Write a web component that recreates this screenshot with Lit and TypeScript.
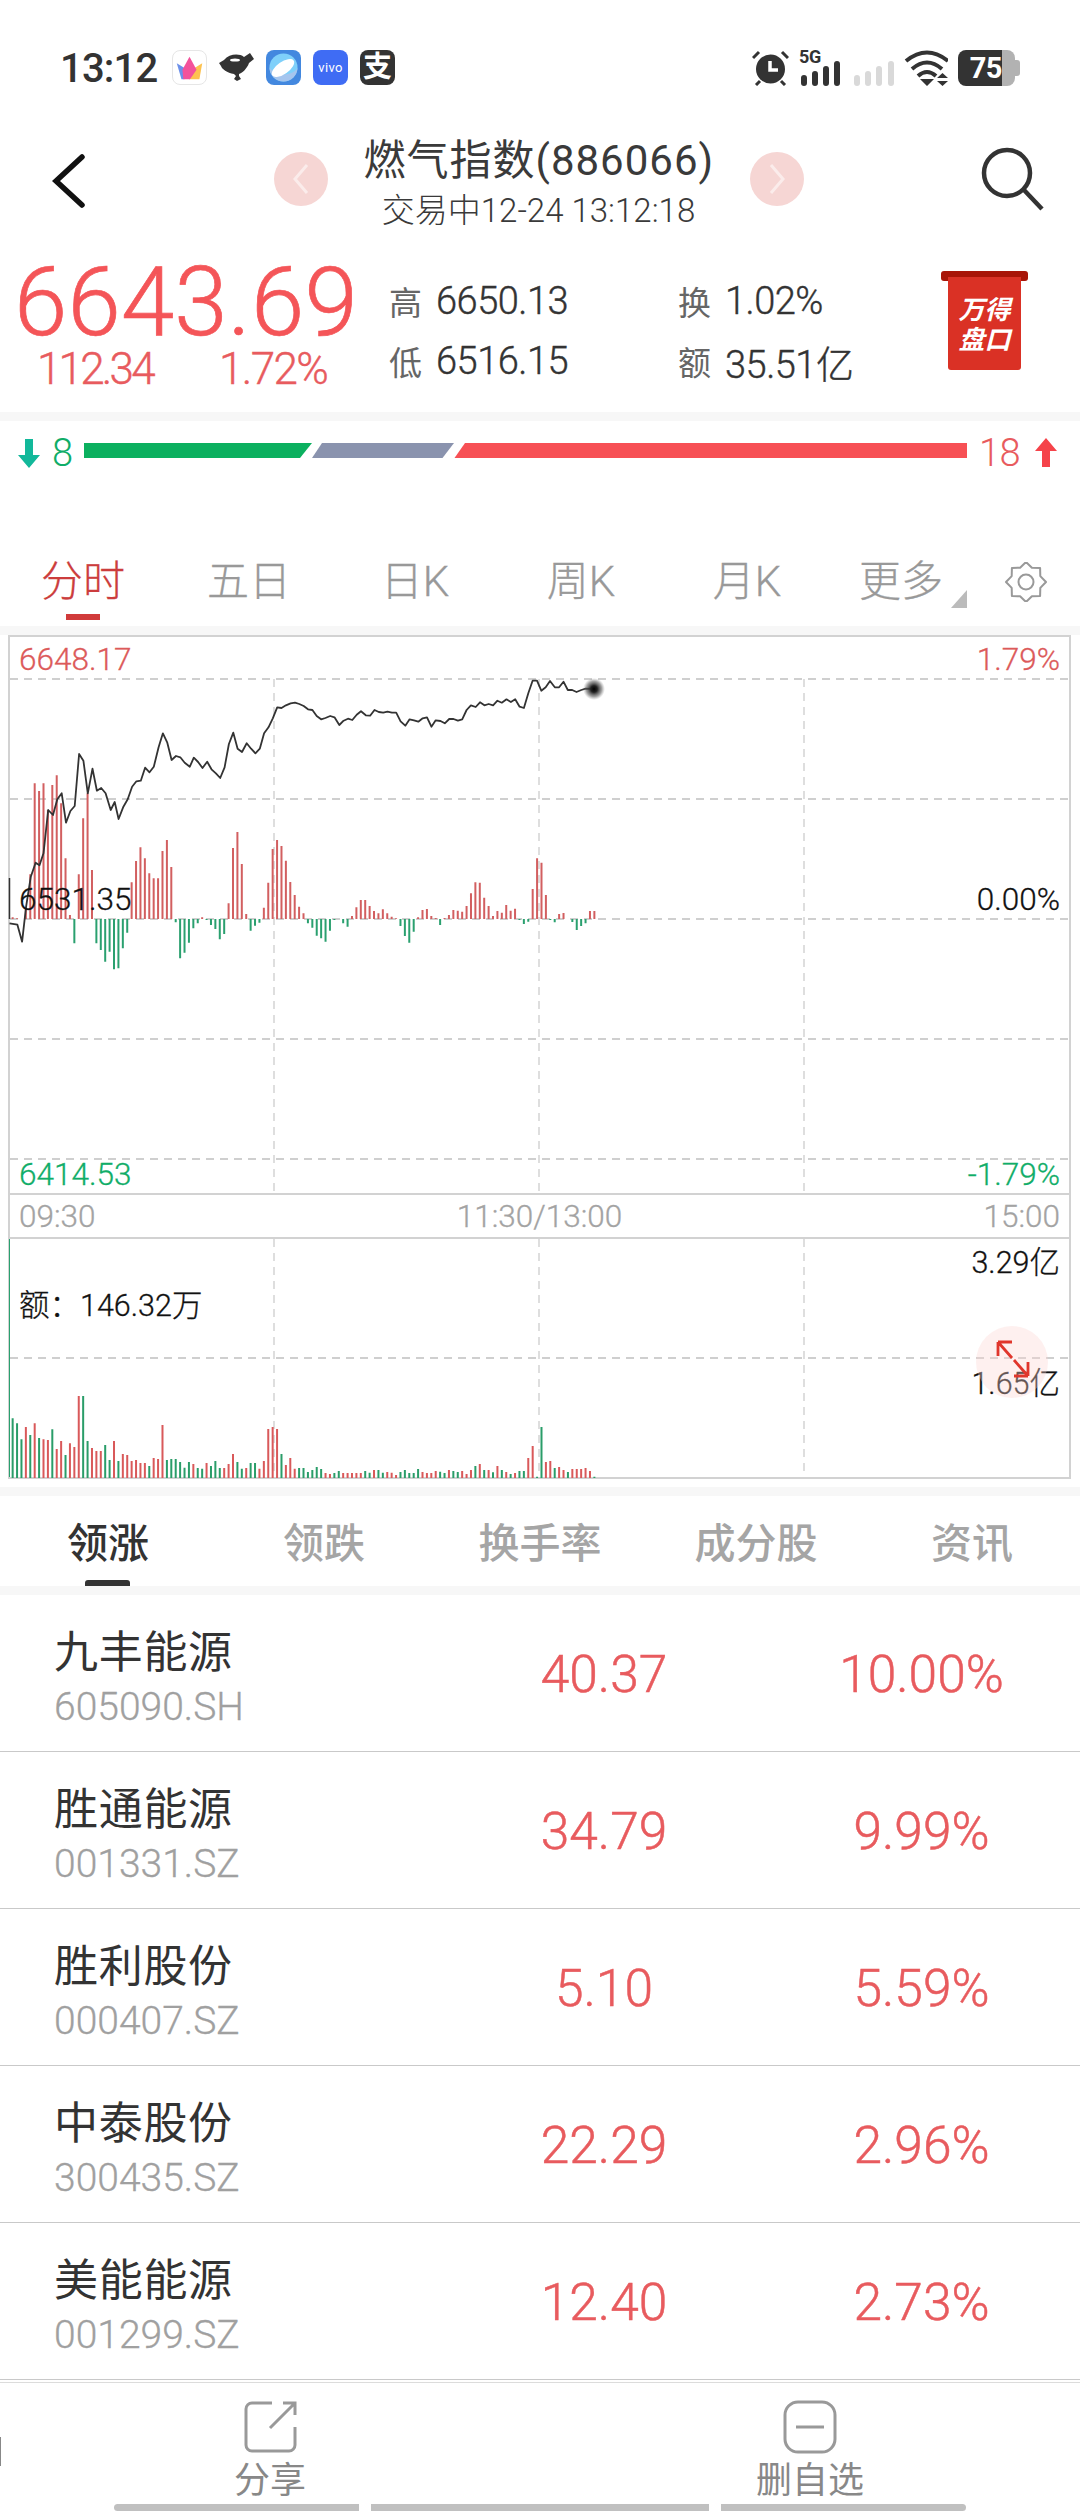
import { LitElement, html, css, svg } from "lit";
import { customElement } from "lit/decorators.js";

const PRICE: number[] = [24,880,44,884,56,935,66,830,78,740,90,698,100,706,110,670,122,540,134,555,145,508,156,490,167,578,178,543,189,528,200,372,211,392,222,490,234,416,245,482,256,474,267,490,280,540,290,516,300,567,312,530,323,508,334,470,345,454,356,452,367,413,378,427,389,410,401,352,412,310,423,338,434,390,445,378,456,382,467,398,480,410,490,383,501,396,512,414,524,395,535,418,546,430,557,444,568,412,579,342,590,308,601,356,612,366,624,340,635,356,646,370,657,356,668,310,679,292,690,265,701,232,712,234,723,226,735,220,746,218,757,222,768,228,779,238,790,240,801,258,812,268,823,264,835,258,846,262,858,285,869,272,880,266,891,270,902,254,913,244,925,256,936,257,947,240,958,246,969,248,980,245,991,248,1002,248,1013,274,1025,287,1036,268,1047,271,1058,275,1069,265,1080,262,1091,290,1102,271,1114,273,1125,280,1136,267,1147,267,1158,272,1169,268,1180,240,1191,226,1203,231,1214,217,1225,226,1236,222,1247,226,1258,212,1269,218,1281,208,1292,216,1303,208,1314,230,1325,234,1336,190,1347,152,1358,152,1369,182,1380,172,1391,153,1403,172,1414,172,1425,155,1436,180,1447,180,1458,186,1470,180,1481,176,1503,177];

// Top of each flow bar in the 3x reference crop; negative = green bar below the zero line.
const FLOW: number[] = [862,865,0,840,733,460,483,460,540,465,436,520,685,855,-940,733,565,490,720,-940,-960,-995,-965,-1018,-1015,-955,-908,757,693,652,685,730,745,745,663,630,711,-877,-985,-968,-938,-895,-880,862,-870,-885,-897,-928,-912,820,654,606,702,852,-902,-887,-878,833,758,657,630,648,692,756,795,830,850,-880,-893,-917,-925,-935,-902,-870,867,-880,-890,858,832,810,810,828,843,850,838,850,860,865,-888,-918,-938,-905,862,840,837,858,864,-885,864,855,840,842,845,828,790,757,758,803,828,858,843,848,825,842,836,-870,-882,-875,777,685,698,795,-870,-877,852,849,867,-876,-900,-888,-880,843,843];

// Top of each volume bar in the crop; negative = green.
const VOL: number[] = [-745,-760,-808,771,-795,760,-804,808,810,-778,837,813,-855,820,831,678,-678,-813,834,843,843,-825,-870,813,-873,852,855,873,870,879,879,-888,864,867,765,-870,-867,-867,-876,-893,-876,882,-894,-896,879,-888,-873,-894,894,882,852,-876,-896,894,-879,-879,896,873,777,771,777,-852,885,864,896,-894,-894,-906,-900,-891,-897,909,912,-909,-903,909,909,909,909,909,-903,-908,900,-900,-908,906,908,915,-906,-900,-909,-909,-897,906,909,909,903,-905,-909,900,-903,-906,903,912,900,-888,882,-900,900,-907,888,-900,906,-912,909,-903,-903,864,828,-920,-771,876,873,-894,891,900,-906,897,897,897,894,903,-920];

const barX = (i: number) => (12.65 + 4.407 * i).toFixed(2);

function flowPath(positive: boolean): string {
  let d = "";
  FLOW.forEach((v, i) => {
    if (v === 0 || v > 0 !== positive) return;
    d += `M${barX(i)} 919V${(630 + Math.abs(v) / 3).toFixed(1)}`;
  });
  return d;
}

function volPath(positive: boolean): string {
  let d = "";
  VOL.forEach((v, i) => {
    if (v > 0 !== positive) return;
    d += `M${barX(i)} 1478V${(1170 + Math.abs(v) / 3).toFixed(1)}`;
  });
  return d;
}

function pricePath(): string {
  let d = "";
  for (let i = 0; i < PRICE.length; i += 2) {
    d += `${i === 0 ? "M" : "L"}${(PRICE[i] / 2.529).toFixed(1)} ${(630 + PRICE[i + 1] / 3).toFixed(1)}`;
  }
  return d;
}

function gearPath(): string {
  const n = 8;
  const pts: string[] = [];
  for (let i = 0; i < n * 2; i++) {
    const a = (i * Math.PI) / n - Math.PI / 2;
    const r = i % 2 === 0 ? 20 : 15.5;
    const x = (21 + r * Math.cos(a)).toFixed(1);
    const y = (20 + r * Math.sin(a)).toFixed(1);
    pts.push(`${x} ${y}`);
  }
  return `M${pts[0]}` + pts.slice(1).concat(pts[0]).map((p) => `L${p}`).join("") + "Z";
}

interface Row { name: string; code: string; price: string; pct: string; }
const ROWS: Row[] = [
  { name: "九丰能源", code: "605090.SH", price: "40.37", pct: "10.00%" },
  { name: "胜通能源", code: "001331.SZ", price: "34.79", pct: "9.99%" },
  { name: "胜利股份", code: "000407.SZ", price: "5.10", pct: "5.59%" },
  { name: "中泰股份", code: "300435.SZ", price: "22.29", pct: "2.96%" },
  { name: "美能能源", code: "001299.SZ", price: "12.40", pct: "2.73%" },
];

@customElement("app-root")
export class AppRoot extends LitElement {
  static styles = css`
    :host {
      display: block;
      width: 1080px;
      height: 2520px;
      overflow: hidden;
      background: #fff;
      color: #333;
      font-family: Roboto, "Noto Sans CJK SC", sans-serif;
    }
    svg { display: block; }

    .status { height: 120px; padding: 50px 60px 0; box-sizing: border-box; display: flex; justify-content: space-between; align-items: flex-start; }
    .status-left, .status-right { display: flex; align-items: flex-start; }
    .time { width: 112px; font-size: 40px; line-height: 38px; font-weight: 500; color: #333; letter-spacing: -0.8px; }
    .apps { display: flex; gap: 12px; }
    .app { width: 35px; height: 35px; border-radius: 8px; box-sizing: border-box; overflow: hidden; display: flex; align-items: center; justify-content: center; }
    .app.crown { border: 1px solid #e6e6e6; background: #fff; }
    .app.planet { background: #4388df; }
    .app.vivo { background: #3f6cf4; color: #fff; font-size: 13px; letter-spacing: 0.3px; }
    .app.ali { background: #333; color: #fff; font-size: 29px; font-weight: 700; line-height: 35px; }
    .alarm { margin-right: 10px; }
    .net { width: 42px; height: 36px; position: relative; margin-right: 13px; }
    .g5 { position: absolute; left: 0; top: -3px; font-size: 18px; line-height: 20px; font-weight: 700; color: #333; letter-spacing: -0.3px; }
    .sig2 { margin-right: 10px; }
    .wifi { margin-right: 10px; }
    .batt { display: flex; align-items: center; height: 36px; }
    .batt-dark { width: 44px; height: 36px; background: #333; border-radius: 8px 0 0 8px; color: #fff; font-size: 29px; font-weight: 700; line-height: 36px; text-align: right; letter-spacing: -0.5px; }
    .batt-rest { width: 13px; height: 36px; background: #b2b2b2; border-radius: 0 8px 8px 0; }
    .batt-nub { width: 5px; height: 16px; background: #b2b2b2; border-radius: 0 3px 3px 0; }

    .head { height: 120px; display: grid; grid-template-columns: 1fr auto 1fr; padding-right: 3px; box-sizing: border-box; }
    .back { padding: 33px 0 0 52px; }
    .head-mid { display: flex; align-items: flex-start; gap: 36px; padding-top: 32px; }
    .round { width: 54px; height: 54px; border-radius: 50%; background: #f6d6d4; display: flex; align-items: center; justify-content: center; }
    .title-box { width: 350px; text-align: center; margin-top: -16px; }
    .title { font-size: 42px; line-height: 50px; color: #3a3a3a; white-space: nowrap; letter-spacing: 1px; }
    .sub { font-size: 33px; line-height: 44px; margin-top: 3px; font-weight: 300; color: #3a3a3a; white-space: nowrap; }
    .search { justify-self: end; padding: 27px 32px 0 0; }

    .quote { height: 172px; display: flex; box-sizing: border-box; }
    .q-left { width: 389px; flex: none; }
    .price { font-size: 96px; line-height: 80px; margin: 22px 0 0 14px; font-weight: 300; color: #f45558; letter-spacing: 0.2px; white-space: nowrap; -webkit-text-stroke: 0.7px #f45558; }
    .chg { display: grid; grid-template-columns: 182px auto; margin: 10px 0 0 37px; font-size: 44px; line-height: 34px; font-weight: 300; color: #e85b5e; -webkit-text-stroke: 0.4px #e85b5e; }
    .chg .a { letter-spacing: -2.8px; }
    .chg .b { letter-spacing: -1.6px; }
    .stats { width: 552px; flex: none; display: grid; grid-template-columns: 289px 263px; grid-auto-rows: 60px; padding-top: 31px; }
    .stat { display: flex; align-items: center; white-space: nowrap; }
    .stat b { font-weight: 400; font-size: 33px; color: #666; width: 47px; flex: none; }
    .stat span { font-size: 38px; color: #333; font-weight: 300; letter-spacing: -0.5px; -webkit-text-stroke: 0.4px #333; }
    .badge { width: 87px; margin-top: 31px; position: relative; }
    .badge-top { height: 10px; background: #a81508; border-radius: 3px; }
    .badge-body { width: 73px; height: 93px; margin: -4px 0 0 7px; background: #da3125; border-radius: 0 0 3px 3px; color: #fff; font-weight: 700; font-style: italic; font-size: 26px; line-height: 30px; text-align: center; padding-top: 18px; box-sizing: border-box; }

    .strip { height: 9px; background: #f7f7f7; }

    .breadth { height: 119px; box-sizing: border-box; padding: 17px 0 0 18px; display: flex; align-items: flex-start; }
    .breadth .n { font-size: 38px; line-height: 30px; font-weight: 300; }
    .n.down { color: #10ad68; width: 32px; margin-left: 12px; }
    .n.up { color: #e85b5e; width: 56px; margin-left: 12px; letter-spacing: -0.6px; }
    .bars { margin-top: 5px; }

    .tabs { height: 86px; display: grid; grid-template-columns: repeat(6, 166px) 1fr; }
    .tab { font-size: 42px; line-height: 40px; color: #999; text-align: center; padding-top: 22px; font-weight: 300; position: relative; white-space: nowrap; -webkit-text-stroke: 0.3px #999; }
    .tab.on { color: #cc3d3d; -webkit-text-stroke: 0.3px #cc3d3d; }
    .tab.on::after { content: ""; position: absolute; left: 66px; top: 74px; width: 34px; height: 6px; background: #d13b3b; }
    .tab.more { display: flex; justify-content: center; }
    .more-tri { margin: 28px 0 0 8px; }
    .gear { padding: 22px 0 0 9px; }

    .frame { box-sizing: border-box; width: 1063px; height: 844px; margin: 0 0 8px 8px; border: 2px solid #d2d2d2; }
    .main { position: relative; height: 556px; }
    .axis { height: 42px; border-top: 2px solid #d2d2d2; border-bottom: 2px solid #d2d2d2; display: flex; align-items: center; justify-content: space-between; padding: 0 9px; font-size: 31.5px; color: #a3a3a3; font-weight: 300; -webkit-text-stroke: 0.3px #a3a3a3; }
    .vol { position: relative; height: 238px; }
    .chart { overflow: visible; }
    .lbl { position: absolute; font-size: 31.5px; line-height: 30px; font-weight: 300; white-space: nowrap; -webkit-text-stroke: 0.3px currentColor; }
    .lbl.l { left: 9px; }
    .lbl.r { right: 9px; }
    .red { color: #dc5a5a; }
    .grn { color: #10ad68; }
    .blk { color: #111; }
    .vol .lbl { font-size: 30.5px; }
    .expand { position: absolute; left: 966px; top: 87px; }

    .tabs2 { height: 90px; display: grid; grid-template-columns: repeat(5, 216px); }
    .t2 { font-size: 41px; line-height: 40px; padding-top: 28px; text-align: center; color: #a5a5a5; font-weight: 500; position: relative; }
    .t2.on { color: #333; }
    .t2.on::after { content: ""; position: absolute; left: 85px; top: 84px; width: 45px; height: 6px; background: #333; border-radius: 3px 3px 0 0; }

    .row { height: 157px; box-sizing: border-box; border-bottom: 1px solid #c9c9c9; display: grid; grid-template-columns: 445px 318px 317px; }
    .row-name { padding: 33px 0 0 54px; }
    .nm { font-size: 44px; line-height: 50px; color: #333; letter-spacing: 0.7px; }
    .cd { font-size: 39px; line-height: 44px; margin-top: 7px; color: #a0a0a0; font-weight: 300; -webkit-text-stroke: 0.3px #a0a0a0; }
    .val { font-size: 51.5px; line-height: 160px; text-align: center; color: #e85b5e; font-weight: 300; -webkit-text-stroke: 0.5px #e85b5e; }

    .nav { margin-top: 2px; height: 122px; box-sizing: border-box; border-top: 1px solid #dcdcdc; display: grid; grid-template-columns: 540px 540px; position: relative; }
    .nav::before { content: ""; position: absolute; left: 0; top: 54px; width: 1px; height: 29px; background: #888; }
    .nav-item { display: flex; flex-direction: column; align-items: center; padding-top: 17px; font-size: 36px; line-height: 36px; color: #888; }
    .nav-item span { margin-top: 9px; }
    .gest { display: flex; gap: 12px; padding-left: 114px; }
    .gest i { display: block; height: 7px; background: #c0c0c0; }
    .g1 { width: 245px; border-radius: 4px 0 0 4px; }
    .g2 { width: 338px; }
    .g3 { width: 245px; border-radius: 0 4px 4px 0; }
  `;

  private statusBar() {
    return html`<div class="status">
      <div class="status-left">
        <div class="time">13:12</div>
        <div class="apps">
          <div class="app crown">
            <svg width="33" height="33" viewBox="0 0 35 35">
              <path d="M4 13L17 21L12 30H9Z" fill="#6c90ea"/>
              <path d="M31 13L18 21L17 30H28Z" fill="#fdc250"/>
              <path d="M17.5 6L25 20L18 30H11L10 20Z" fill="#f3529b"/>
            </svg>
          </div>
          <svg width="35" height="35" viewBox="0 0 35 35">
            <path d="M0 13L5 10C10 4 20 3 25 7L31 3L35 9L30 13C28 19 23 23 20 24L20 26L22 29L18 31L15 29L17 26L15 24C8 23 3 19 2 16Z" fill="#333"/>
            <ellipse cx="16" cy="10" rx="5" ry="1.6" fill="#fff"/>
          </svg>
          <div class="app planet">
            <svg width="35" height="35" viewBox="0 0 35 35">
              <circle cx="17.5" cy="17.5" r="14" fill="#7fd0fa"/>
              <path d="M3.5 17.5A14 14 0 0 0 31.5 17.5C30 24 12 29 3.5 17.5Z" fill="#a5c5ee"/>
              <ellipse cx="17" cy="18" rx="13" ry="6" fill="#fff" transform="rotate(-35 17 18)"/>
            </svg>
          </div>
          <div class="app vivo">vivo</div>
          <div class="app ali">支</div>
        </div>
      </div>
      <div class="status-right">
        <svg class="alarm" width="37" height="36" viewBox="0 0 37 36">
          <circle cx="18.5" cy="19" r="14.5" fill="#333"/>
          <path d="M18 11V20H26" fill="none" stroke="#fff" stroke-width="3.5"/>
          <path d="M1 8L7 2M36 8L30 2M4 35L8 31M33 35L29 31" stroke="#333" stroke-width="3" fill="none"/>
        </svg>
        <div class="net">
          <div class="g5">5G</div>
          <svg width="42" height="36" viewBox="0 0 42 36">
            <path d="M5 33V28M16 33V24M27 33V19M38 33V14" stroke="#333" stroke-width="6" stroke-linecap="round"/>
          </svg>
        </div>
        <svg class="sig2" width="40" height="36" viewBox="0 0 40 36">
          <path d="M3 33V28M14 33V24M25 33V19M37 33V14" stroke="#d9d9d9" stroke-width="6" stroke-linecap="round"/>
        </svg>
        <svg class="wifi" width="44" height="36" viewBox="0 0 44 36">
          <path d="M2 11Q23 -6 44 11M8 19Q23 6 38 19M14 26Q23 18 32 26" fill="none" stroke="#333" stroke-width="4"/>
          <path d="M16 29H30L23 36ZM33 28L38.5 23L44 28ZM33 31H44L38.5 36Z" fill="#333"/>
        </svg>
        <div class="batt">
          <div class="batt-dark">75</div>
          <div class="batt-rest"></div>
          <div class="batt-nub"></div>
        </div>
      </div>
    </div>`;
  }

  private header() {
    return html`<div class="head">
      <div class="back">
        <svg width="34" height="56" viewBox="0 0 34 56">
          <path d="M30 4L4 28L30 52" fill="none" stroke="#111" stroke-width="5.5" stroke-linecap="round" stroke-linejoin="miter"/>
        </svg>
      </div>
      <div class="head-mid">
        <div class="round">
          <svg width="16" height="32" viewBox="0 0 16 32"><path d="M14 2L2 16L14 30" fill="none" stroke="#fbeceb" stroke-width="3"/></svg>
        </div>
        <div class="title-box">
          <div class="title">燃气指数(886066)</div>
          <div class="sub">交易中12-24 13:12:18</div>
        </div>
        <div class="round">
          <svg width="16" height="32" viewBox="0 0 16 32"><path d="M2 2L14 16L2 30" fill="none" stroke="#fbeceb" stroke-width="3"/></svg>
        </div>
      </div>
      <div class="search">
        <svg width="64" height="64" viewBox="0 0 64 64">
          <circle cx="26" cy="26" r="23" fill="none" stroke="#333" stroke-width="4.5"/>
          <path d="M43 43L61 62" stroke="#333" stroke-width="4.5" fill="none"/>
        </svg>
      </div>
    </div>`;
  }

  private quote() {
    return html`<div class="quote">
      <div class="q-left">
        <div class="price">6643.69</div>
        <div class="chg"><span class="a">112.34</span><span class="b">1.72%</span></div>
      </div>
      <div class="stats">
        <div class="stat"><b>高</b><span>6650.13</span></div>
        <div class="stat"><b>换</b><span>1.02%</span></div>
        <div class="stat"><b>低</b><span>6516.15</span></div>
        <div class="stat"><b>额</b><span>35.51亿</span></div>
      </div>
      <div class="badge">
        <div class="badge-top"></div>
        <div class="badge-body">万得<br />盘口</div>
      </div>
    </div>`;
  }

  private breadth() {
    return html`<div class="breadth">
      <svg width="22" height="30" viewBox="0 0 22 30"><path d="M7 1H15V17H22L11 30L0 17H7Z" fill="#12b89a"/></svg>
      <div class="n down">8</div>
      <svg class="bars" width="883" height="15" viewBox="0 0 883 15">
        <path d="M0 0H228L216 15H0Z" fill="#0bb05f"/>
        <path d="M238 0H370L358.5 15H228Z" fill="#8a93ae"/>
        <path d="M381 0H883V15H370.5Z" fill="#f75055"/>
      </svg>
      <div class="n up">18</div>
      <svg width="22" height="30" viewBox="0 0 22 30"><path d="M11 0L22 13H15V29H7V13H0Z" fill="#f5434a"/></svg>
    </div>`;
  }

  private periodTabs() {
    return html`<div class="tabs">
      <div class="tab on">分时</div>
      <div class="tab">五日</div>
      <div class="tab">日K</div>
      <div class="tab">周K</div>
      <div class="tab">月K</div>
      <div class="tab more">
        <span>更多</span>
        <svg class="more-tri" width="16" height="18" viewBox="0 0 16 18"><path d="M16 0V18H0Z" fill="#bbb"/></svg>
      </div>
      <div class="gear">
        <svg width="42" height="40" viewBox="0 0 42 40">
          <path d=${gearPath()} fill="none" stroke="#999" stroke-width="2" stroke-linejoin="round"/>
          <circle cx="21" cy="20" r="7.5" fill="none" stroke="#999" stroke-width="2"/>
        </svg>
      </div>
    </div>`;
  }

  private grid(lines: number[], top: number, bottom: number) {
    return svg`
      ${lines.map((y) => svg`<path d=${`M10 ${y}H1069`} stroke="#cfcfcf" stroke-width="2" stroke-dasharray="8 6"/>`)}
      ${[274, 539, 804].map((x) => svg`<path d=${`M${x} ${top}V${bottom}`} stroke="#d6d6d6" stroke-width="1.6" stroke-dasharray="8 6"/>`)}
    `;
  }

  private chart() {
    return html`<div class="frame">
      <div class="main">
        <svg class="chart" width="1059" height="556" viewBox="10 637 1059 556">
          <defs>
            <radialGradient id="dot">
              <stop offset="0" stop-color="#000"/>
              <stop offset="0.3" stop-color="#222"/>
              <stop offset="0.7" stop-color="#555" stop-opacity="0.55"/>
              <stop offset="1" stop-color="#888" stop-opacity="0"/>
            </radialGradient>
          </defs>
          ${this.grid([679, 799, 919, 1039, 1159], 679, 1193)}
          <path d=${flowPath(true)} stroke="#d25f60" stroke-width="2" fill="none"/>
          <path d=${flowPath(false)} stroke="#2aa06f" stroke-width="2" fill="none"/>
          <path d="M9.5 878V919" stroke="#333" stroke-width="1.5"/>
          <path d=${pricePath()} fill="none" stroke="#333" stroke-width="1.8" stroke-linejoin="round"/>
          <circle cx="594" cy="689" r="11" fill="url(#dot)"/>
        </svg>
        <div class="lbl l red" style="top:8px">6648.17</div>
        <div class="lbl r red" style="top:8px">1.79%</div>
        <div class="lbl l blk" style="top:248px">6531.35</div>
        <div class="lbl r blk" style="top:248px">0.00%</div>
        <div class="lbl l grn" style="top:523px">6414.53</div>
        <div class="lbl r grn" style="top:523px">-1.79%</div>
      </div>
      <div class="axis"><span>09:30</span><span>11:30/13:00</span><span>15:00</span></div>
      <div class="vol">
        <svg class="chart" width="1059" height="238" viewBox="10 1239 1059 238">
          ${this.grid([1358], 1239, 1477)}
          <path d="M9.5 1239V1477" stroke="#2aa06f" stroke-width="1"/>
          <path d=${volPath(true)} stroke="#d9595a" stroke-width="2" fill="none"/>
          <path d=${volPath(false)} stroke="#2a9d69" stroke-width="2" fill="none"/>
        </svg>
        <div class="lbl l blk" style="top:52px">额：146.32万</div>
        <div class="lbl r blk" style="top:9px">3.29亿</div>
        <div class="lbl r blk" style="top:130px">1.65亿</div>
        <svg class="expand" width="72" height="72" viewBox="0 0 72 72">
          <circle cx="36" cy="36" r="36" fill="#fbd5d0" fill-opacity="0.35"/>
          <path d="M22 16L36 32M22 16V30M22 16H36M38 34L52 50M52 50V36M52 50H38" fill="none" stroke="#e0362c" stroke-width="2.8"/>
        </svg>
      </div>
    </div>`;
  }

  render() {
    return html`
      ${this.statusBar()}
      ${this.header()}
      ${this.quote()}
      <div class="strip"></div>
      ${this.breadth()}
      ${this.periodTabs()}
      <div class="strip"></div>
      ${this.chart()}
      <div class="strip"></div>
      <div class="tabs2">
        <div class="t2 on">领涨</div>
        <div class="t2">领跌</div>
        <div class="t2">换手率</div>
        <div class="t2">成分股</div>
        <div class="t2">资讯</div>
      </div>
      <div class="strip"></div>
      ${ROWS.map(
        (r) => html`<div class="row">
          <div class="row-name"><div class="nm">${r.name}</div><div class="cd">${r.code}</div></div>
          <div class="val">${r.price}</div>
          <div class="val">${r.pct}</div>
        </div>`
      )}
      <div class="nav">
        <div class="nav-item">
          <svg width="54" height="54" viewBox="0 0 54 54">
            <path d="M29 3H9A6 6 0 0 0 3 9V45A6 6 0 0 0 9 51H46A6 6 0 0 0 52 45V27" fill="none" stroke="#999" stroke-width="3"/>
            <path d="M27 28L52 3M40 3H52V15" fill="none" stroke="#999" stroke-width="3"/>
          </svg>
          <span>分享</span>
        </div>
        <div class="nav-item">
          <svg width="54" height="54" viewBox="0 0 54 54">
            <rect x="2" y="2" width="50" height="50" rx="13" fill="none" stroke="#999" stroke-width="3"/>
            <path d="M13 27H41" stroke="#999" stroke-width="3"/>
          </svg>
          <span>删自选</span>
        </div>
      </div>
      <div class="gest"><i class="g1"></i><i class="g2"></i><i class="g3"></i></div>
    `;
  }
}
